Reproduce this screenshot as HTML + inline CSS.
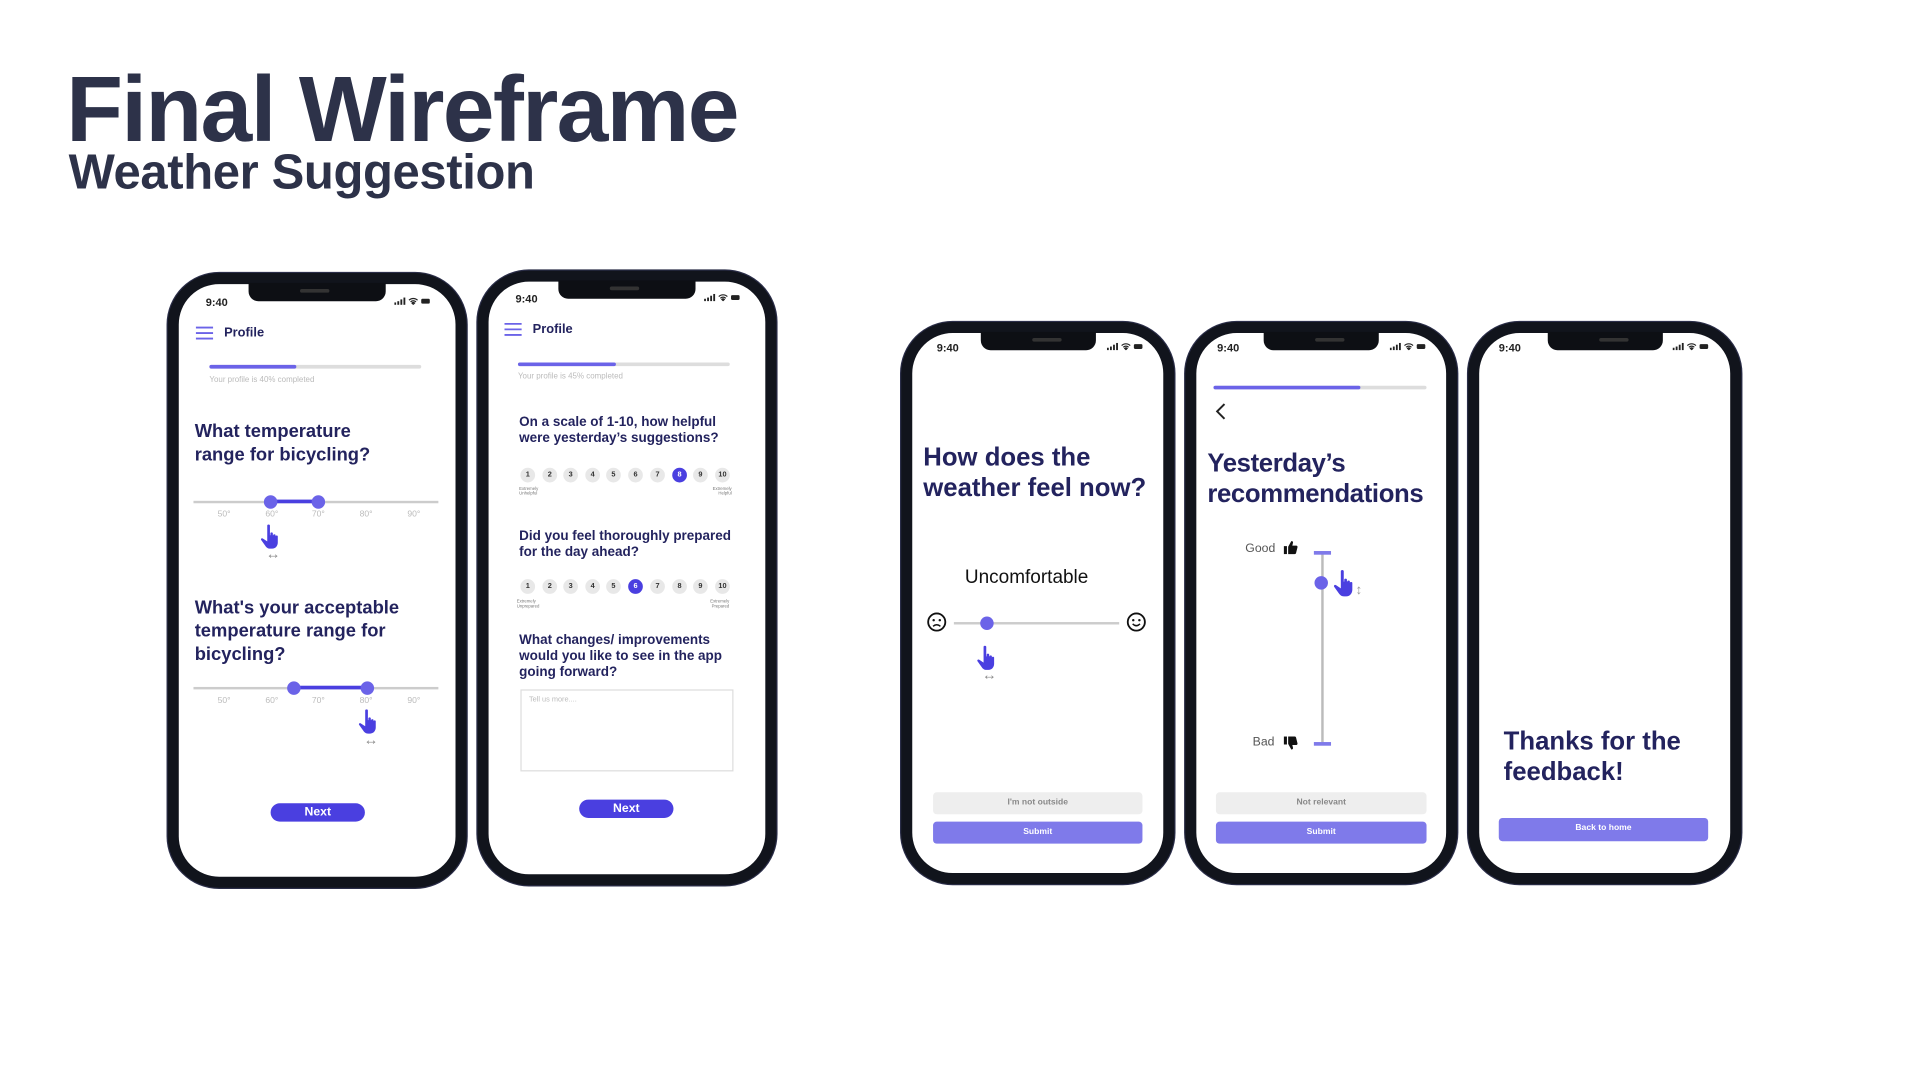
<!DOCTYPE html>
<html><head><meta charset="utf-8"><style>
*{margin:0;padding:0;box-sizing:border-box}
html,body{width:1920px;height:1080px;overflow:hidden;background:#fff;font-family:"Liberation Sans",sans-serif}
#w{position:absolute;left:0;top:0;width:1568px;height:882px;transform:scale(1.22449);transform-origin:0 0}
.a{position:absolute}
.ph{position:absolute;border:9px solid #11141c;border-radius:42px;background:#fff;box-shadow:0 0 0 1px #2a2d48}
.notch{position:absolute;top:-1px;left:50%;transform:translateX(-50%);width:112px;height:15px;background:#0d0f14;border-radius:0 0 8px 8px}
.notch:after{content:"";position:absolute;left:42px;top:5px;width:24px;height:3px;border-radius:2px;background:#333}
.st{position:absolute;font-size:9px;font-weight:bold;color:#222}
.si{position:absolute;width:30px;height:6px}
.h{color:#23235e;font-weight:bold}
.bar{position:absolute;height:3px;background:#ddd;border-radius:2px}
.bar i{position:absolute;left:0;top:0;height:3px;background:#6b63e8;border-radius:2px}
.cap{position:absolute;font-size:6.5px;color:#bbb}
.tk{position:absolute;font-size:7px;color:#bbb;transform:translateX(-50%)}
.kn{position:absolute;width:11px;height:11px;border-radius:50%;background:#6b63e8;transform:translate(-50%,-50%)}
.c{position:absolute;width:12px;height:12px;border-radius:50%;background:#e8e8e8;font-size:6px;font-weight:bold;color:#333;text-align:center;line-height:12px;transform:translate(-50%,-50%)}
.c.on{background:#4a3fe0;color:#fff}
.btn{position:absolute;border-radius:8px;background:#4a3fe0;color:#fff;text-align:center;font-weight:bold}
.b2{position:absolute;border-radius:3px;text-align:center;font-size:7px;font-weight:bold;line-height:18px}
.arr{position:absolute;font-size:12px;line-height:10px;color:#888;transform:translateX(-50%)}
</style></head><body><div id="w">
<div class="a h" style="left:54px;top:46px;font-size:76px;letter-spacing:-1.4px;color:#2d3249">Final Wireframe</div>
<div class="a" style="left:56px;top:119px;font-size:40px;font-weight:bold;color:#2d3249;letter-spacing:-0.3px">Weather Suggestion</div>

<svg width="0" height="0" style="position:absolute"><defs>
<symbol id="hand" viewBox="0 0 20 24"><path d="M7 2.5c0-1.4 2.4-1.4 2.4 0V11h0.4V9.5c0-1.3 2.2-1.300 2.2 0V11h0.3c0-1.2 2.1-1.2 2.1 0v1c0-1 2-1 2 0v5.5c0 3-2 5.5-5 5.5H9.5C7.5 23 6.4 22 5.4 20.6L1.6 15.3c-.7-1 .6-2.2 1.600-1.3L7 16.5z" fill="#4a3fe0"/></symbol>
<symbol id="sig" viewBox="0 0 30 6"><rect x="0" y="4" width="1.5" height="2" fill="#222"/><rect x="2.5" y="3" width="1.5" height="3" fill="#222"/><rect x="5" y="1.5" width="1.5" height="4.5" fill="#222"/><rect x="7.5" y="0" width="1.5" height="6" fill="#222"/><path d="M12 2.2a5 5 0 0 1 7 0M13.3 3.6a3 3 0 0 1 4.4 0M15.5 5.5l-1-1a1.4 1.4 0 0 1 2 0z" stroke="#222" stroke-width="1" fill="none"/><rect x="22" y="1" width="7" height="4" rx="1" fill="#222"/></symbol>
<symbol id="thumb" viewBox="0 0 12 12"><rect x="0.5" y="5" width="2.5" height="6.5" fill="#111"/><path d="M4 5.5L6.5 1c1-.3 1.7.4 1.4 1.5L7.4 4.6H10.6c.8 0 1.2.7 1 1.4l-1.2 4.8c-.2.5-.6.7-1.1.7H4z" fill="#111"/></symbol>
</defs></svg>

<!-- Phone 1 -->
<div class="ph" style="left:137px;top:223px;width:244px;height:502px"><div class="notch"></div></div>
<div class="st" style="left:168px;top:242px">9:40</div>
<svg class="si" style="left:322px;top:243px"><use href="#sig"/></svg>
<svg class="a" style="left:159px;top:266px" width="16" height="12"><path d="M1 1.5h14M1 6h14M1 10.5h14" stroke="#6b63e8" stroke-width="1.5"/></svg>
<div class="a h" style="left:183px;top:266px;font-size:10.5px">Profile</div>
<div class="bar" style="left:171px;top:298px;width:173px"><i style="width:71px"></i></div>
<div class="cap" style="left:171px;top:307px">Your profile is 40% completed</div>
<div class="a h" style="left:159px;top:343px;font-size:15px;line-height:19px">What temperature<br>range for bicycling?</div>
<div class="a" style="left:158px;top:409px;width:200px;height:2px;background:#ccc"></div>
<div class="a" style="left:221px;top:408px;width:39px;height:3px;background:#4a3fe0"></div>
<div class="kn" style="left:221px;top:410px"></div><div class="kn" style="left:260px;top:410px"></div>
<div class="tk" style="left:183px;top:417px">50°</div><div class="tk" style="left:222px;top:417px">60°</div><div class="tk" style="left:260px;top:417px">70°</div><div class="tk" style="left:299px;top:417px">80°</div><div class="tk" style="left:338px;top:417px">90°</div>
<svg class="a" style="left:211px;top:427px" width="20" height="22"><use href="#hand"/></svg>
<div class="arr" style="left:223px;top:447px">↔</div>
<div class="a h" style="left:159px;top:487px;font-size:15px;line-height:19px">What's your acceptable<br>temperature range for<br>bicycling?</div>
<div class="a" style="left:158px;top:561px;width:200px;height:2px;background:#ccc"></div>
<div class="a" style="left:240px;top:560px;width:60px;height:3px;background:#4a3fe0"></div>
<div class="kn" style="left:240px;top:562px"></div><div class="kn" style="left:300px;top:562px"></div>
<div class="tk" style="left:183px;top:569px">50°</div><div class="tk" style="left:222px;top:569px">60°</div><div class="tk" style="left:260px;top:569px">70°</div><div class="tk" style="left:299px;top:569px">80°</div><div class="tk" style="left:338px;top:569px">90°</div>
<svg class="a" style="left:291px;top:578px" width="20" height="22"><use href="#hand"/></svg>
<div class="arr" style="left:303px;top:599px">↔</div>
<div class="btn" style="left:221px;top:656px;width:77px;height:15px;font-size:10px;line-height:15px">Next</div>

<!-- Phone 2 -->
<div class="ph" style="left:390px;top:221px;width:244px;height:502px"><div class="notch"></div></div>
<div class="st" style="left:421px;top:239px">9:40</div>
<svg class="si" style="left:575px;top:240px"><use href="#sig"/></svg>
<svg class="a" style="left:411px;top:263px" width="16" height="12"><path d="M1 1.5h14M1 6h14M1 10.5h14" stroke="#6b63e8" stroke-width="1.5"/></svg>
<div class="a h" style="left:435px;top:263px;font-size:10.5px">Profile</div>
<div class="bar" style="left:423px;top:296px;width:173px"><i style="width:80px"></i></div>
<div class="cap" style="left:423px;top:304px">Your profile is 45% completed</div>
<div class="a h" style="left:424px;top:339px;font-size:11px;line-height:13px">On a scale of 1-10, how helpful<br>were yesterday’s suggestions?</div>
<div class="c" style="left:431px;top:388px">1</div><div class="c" style="left:449px;top:388px">2</div><div class="c" style="left:466px;top:388px">3</div><div class="c" style="left:484px;top:388px">4</div><div class="c" style="left:501px;top:388px">5</div><div class="c" style="left:519px;top:388px">6</div><div class="c" style="left:537px;top:388px">7</div><div class="c on" style="left:555px;top:388px">8</div><div class="c" style="left:572px;top:388px">9</div><div class="c" style="left:590px;top:388px">10</div>
<div class="a" style="left:424px;top:397px;font-size:3.5px;color:#777;line-height:4px">Extremely<br>Unhelpful</div>
<div class="a" style="left:582px;top:397px;font-size:3.5px;color:#777;line-height:4px;text-align:right">Extremely<br>Helpful</div>
<div class="a h" style="left:424px;top:432px;font-size:11px;line-height:13px">Did you feel thoroughly prepared<br>for the day ahead?</div>
<div class="c" style="left:431px;top:479px">1</div><div class="c" style="left:449px;top:479px">2</div><div class="c" style="left:466px;top:479px">3</div><div class="c" style="left:484px;top:479px">4</div><div class="c" style="left:501px;top:479px">5</div><div class="c on" style="left:519px;top:479px">6</div><div class="c" style="left:537px;top:479px">7</div><div class="c" style="left:555px;top:479px">8</div><div class="c" style="left:572px;top:479px">9</div><div class="c" style="left:590px;top:479px">10</div>
<div class="a" style="left:422px;top:489px;font-size:3.5px;color:#777;line-height:4px">Extremely<br>Unprepared</div>
<div class="a" style="left:580px;top:489px;font-size:3.5px;color:#777;line-height:4px;text-align:right">Extremely<br>Prepared</div>
<div class="a h" style="left:424px;top:517px;font-size:11px;line-height:13px">What changes/ improvements<br>would you like to see in the app<br>going forward?</div>
<div class="a" style="left:425px;top:563px;width:174px;height:67px;border:1px solid #ddd"></div>
<div class="a" style="left:432px;top:569px;font-size:6px;color:#bbb">Tell us more....</div>
<div class="btn" style="left:473px;top:653px;width:77px;height:15px;font-size:10px;line-height:15px">Next</div>

<!-- Phone 3 -->
<div class="ph" style="left:736px;top:263px;width:223px;height:459px"><div class="notch" style="width:94px"></div></div>
<div class="st" style="left:765px;top:279px">9:40</div>
<svg class="si" style="left:904px;top:280px"><use href="#sig"/></svg>
<div class="a h" style="left:754px;top:361px;font-size:21px;line-height:25px">How does the<br>weather feel now?</div>
<div class="a" style="left:788px;top:463px;font-size:15.5px;color:#111">Uncomfortable</div>
<div class="a" style="left:779px;top:508px;width:135px;height:2px;background:#ccc"></div>
<div class="kn" style="left:806px;top:509px"></div>
<svg class="a" style="left:757px;top:500px" width="16" height="16"><circle cx="8" cy="8" r="7" stroke="#111" stroke-width="1.5" fill="none"/><circle cx="5.5" cy="6.5" r="1" fill="#111"/><circle cx="10.5" cy="6.5" r="1" fill="#111"/><path d="M5 11.5q3-2.5 6 0" stroke="#111" stroke-width="1.2" fill="none"/></svg>
<svg class="a" style="left:920px;top:500px" width="16" height="16"><circle cx="8" cy="8" r="7" stroke="#111" stroke-width="1.5" fill="none"/><circle cx="5.5" cy="6.5" r="1" fill="#111"/><circle cx="10.5" cy="6.5" r="1" fill="#111"/><path d="M5 9.5q3 3 6 0" stroke="#111" stroke-width="1.2" fill="none"/></svg>
<svg class="a" style="left:796px;top:526px" width="20" height="22"><use href="#hand"/></svg>
<div class="arr" style="left:808px;top:546px">↔</div>
<div class="b2" style="left:762px;top:647px;width:171px;height:18px;background:#eee;color:#888">I'm not outside</div>
<div class="b2" style="left:762px;top:671px;width:171px;height:18px;background:#7f7aea;color:#fff">Submit</div>

<!-- Phone 4 -->
<div class="ph" style="left:968px;top:263px;width:222px;height:459px"><div class="notch" style="width:94px"></div></div>
<div class="st" style="left:994px;top:279px">9:40</div>
<svg class="si" style="left:1135px;top:280px"><use href="#sig"/></svg>
<div class="bar" style="left:991px;top:315px;width:174px"><i style="width:120px"></i></div>
<svg class="a" style="left:991px;top:328px" width="12" height="16"><path d="M9 2L3 8l6 6" stroke="#222" stroke-width="1.6" fill="none"/></svg>
<div class="a h" style="left:986px;top:366px;font-size:21px;line-height:25px;letter-spacing:-0.3px">Yesterday’s<br>recommendations</div>
<div class="a" style="left:1079px;top:452px;width:2px;height:156px;background:#bbb"></div>
<div class="a" style="left:1073px;top:450px;width:14px;height:3px;background:#7f7aea"></div>
<div class="a" style="left:1073px;top:606px;width:14px;height:3px;background:#7f7aea"></div>
<div class="kn" style="left:1079px;top:476px"></div>
<svg class="a" style="left:1088px;top:464px" width="20" height="24"><use href="#hand"/></svg>
<div class="a" style="left:1107px;top:476px;font-size:11px;color:#999">↕</div>
<div class="a" style="left:1017px;top:443px;font-size:10px;color:#555">Good</div>
<svg class="a" style="left:1048px;top:441px" width="12" height="12"><use href="#thumb"/></svg>
<div class="a" style="left:1023px;top:601px;font-size:10px;color:#555">Bad</div>
<svg class="a" style="left:1048px;top:601px;transform:scaleY(-1)" width="12" height="12"><use href="#thumb"/></svg>
<div class="b2" style="left:993px;top:647px;width:172px;height:18px;background:#eee;color:#888">Not relevant</div>
<div class="b2" style="left:993px;top:671px;width:172px;height:18px;background:#7f7aea;color:#fff">Submit</div>

<!-- Phone 5 -->
<div class="ph" style="left:1199px;top:263px;width:223px;height:459px"><div class="notch" style="width:94px"></div></div>
<div class="st" style="left:1224px;top:279px">9:40</div>
<svg class="si" style="left:1366px;top:280px"><use href="#sig"/></svg>
<div class="a h" style="left:1228px;top:593px;font-size:21px;line-height:25px">Thanks for the<br>feedback!</div>
<div class="b2" style="left:1224px;top:668px;width:171px;height:19px;background:#7f7aea;color:#fff">Back to home</div>
</div></body></html>
